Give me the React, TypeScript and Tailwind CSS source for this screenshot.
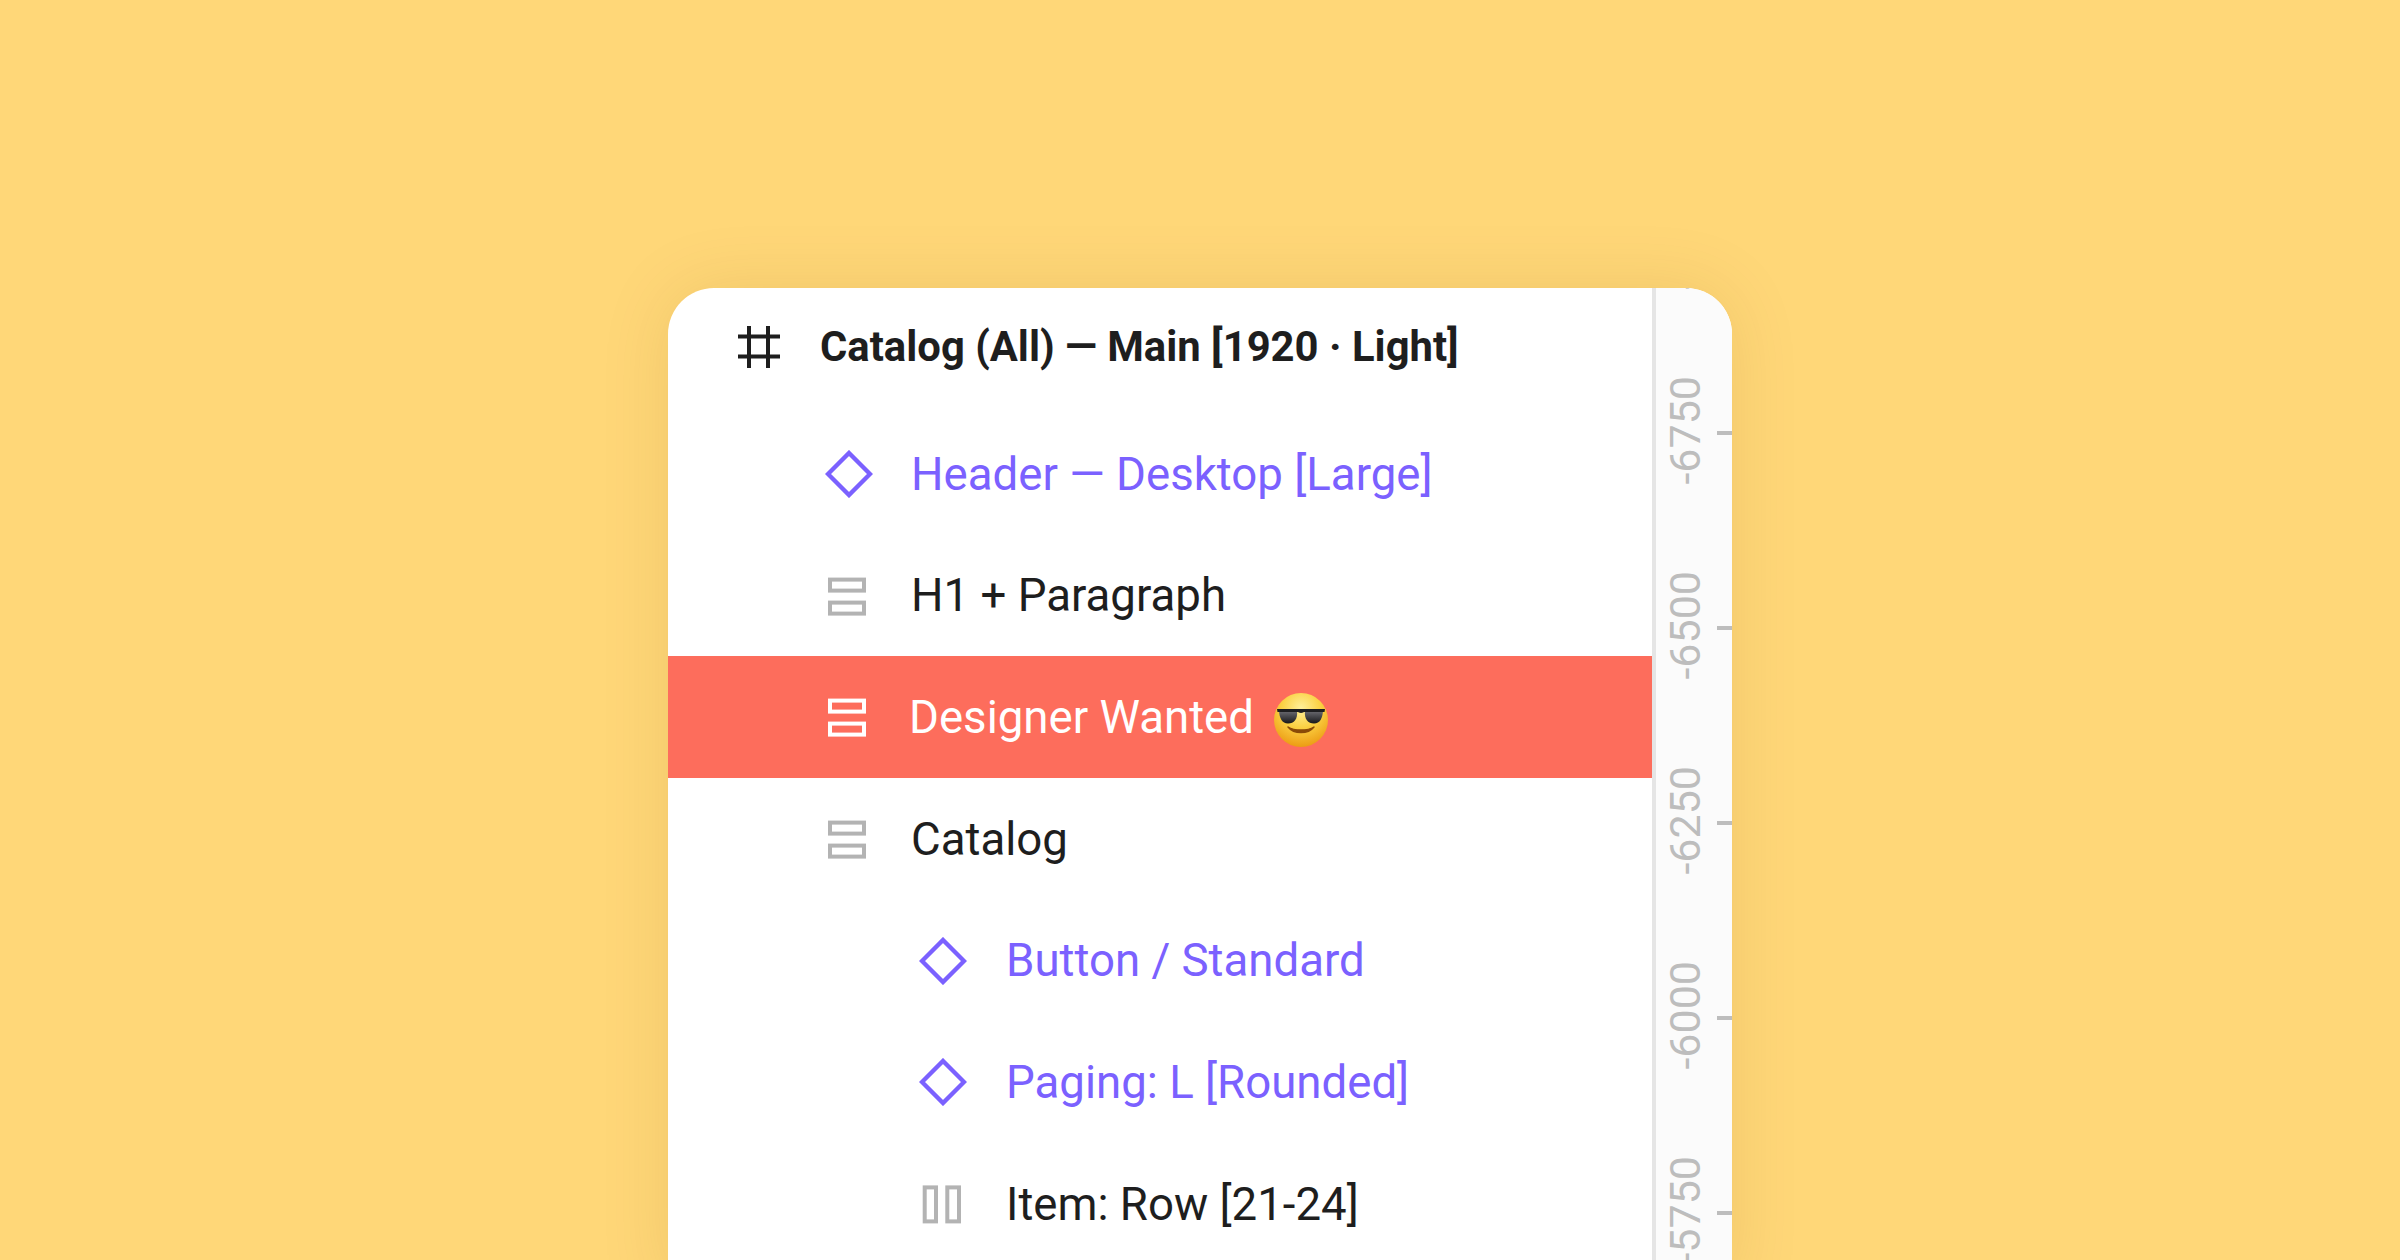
import React from 'react'

const Diamond = () => (
    <svg width="48" height="48" viewBox="0 0 48 48" fill="none" className="shrink-0">
        <path d="M24 3 L45 24 L24 45 L3 24 Z" stroke="#7B61FF" strokeWidth="4.4" />
    </svg>
)

const RowsIcon = ({ color }: { color: string }) => (
    <svg width="48" height="48" viewBox="0 0 48 48" fill="none" className="shrink-0">
        <rect x="5" y="7.6" width="34" height="11" stroke={color} strokeWidth="4" />
        <rect x="5" y="30.6" width="34" height="11" stroke={color} strokeWidth="4" />
    </svg>
)

const ColsIcon = () => (
    <svg width="48" height="48" viewBox="0 0 48 48" fill="none" className="shrink-0">
        <rect x="5.7" y="7.4" width="11.3" height="34" stroke="#B3B3B3" strokeWidth="4" />
        <rect x="28.3" y="7.4" width="11.7" height="34" stroke="#B3B3B3" strokeWidth="4" />
    </svg>
)

const HashIcon = () => (
    <svg width="42" height="42" viewBox="0 0 42 42" fill="none" className="shrink-0">
        <path d="M11 0 V42 M30 0 V42 M0 10.5 H42 M0 30.5 H42" stroke="#1E1E1E" strokeWidth="4" />
    </svg>
)

const CoolEmoji = () => (
    <svg width="56" height="56" viewBox="0 0 56 56" className="shrink-0 ml-[19px] mt-[5px]">
        <defs>
            <radialGradient id="face" cx="50%" cy="28%" r="72%">
                <stop offset="0%" stopColor="#FFF09A" />
                <stop offset="50%" stopColor="#FBD143" />
                <stop offset="100%" stopColor="#EC9C14" />
            </radialGradient>
            <linearGradient id="lens" x1="0" y1="0" x2="0" y2="1">
                <stop offset="0%" stopColor="#6A6A70" />
                <stop offset="100%" stopColor="#18181A" />
            </linearGradient>
        </defs>
        <circle cx="28" cy="28" r="27" fill="url(#face)" />
        <path d="M6 19 H24 C25 27 21 31.5 15 31.5 C9 31.5 6.5 26 6 19 Z" fill="url(#lens)" />
        <path d="M32 19 H50 C49.5 26 47 31.5 41 31.5 C35 31.5 31 27 32 19 Z" fill="url(#lens)" />
        <path d="M4 17 H52 L51.5 20 H4.5 Z" fill="#1E1E20" />
        <path d="M24 19 C26 21.5 30 21.5 32 19 Z" fill="#1E1E20" />
        <path d="M15 35 C21 42.5 35 42.5 41 35 C35 39 21 39 15 35 Z" fill="#8A4B08" stroke="#8A4B08" strokeWidth="1.4" strokeLinejoin="round" />
    </svg>
)

const rulerMarks = ['-7000', '-6750', '-6500', '-6250', '-6000', '-5750']

const App = () => {
    return (
        <div className="h-[1260px] w-full overflow-hidden bg-[#FFD778] pt-[288px] font-['Roboto',sans-serif]">
            <div className="ml-[668px] flex h-[1000px] w-[1064px] overflow-hidden rounded-t-[46px] bg-white shadow-[0_0_70px_rgba(120,80,0,0.12)]">
                <div className="w-[984px] shrink-0 text-[45.6px] text-[#1E1E1E]">
                    <div className="flex h-[125px] items-center gap-[40px] pb-[7px] pl-[70px] text-[41.8px]">
                        <HashIcon />
                        <span className="font-bold">Catalog (All) — Main [1920 · Light]</span>
                    </div>
                    <div className="flex h-[121.7px] items-center gap-[38px] pl-[157px] text-[#7B61FF]">
                        <Diamond />
                        <span className="pt-[2px]">Header — Desktop [Large]</span>
                    </div>
                    <div className="flex h-[121.7px] items-center gap-[38px] pl-[157px]">
                        <RowsIcon color="#B3B3B3" />
                        <span className="pt-[2px]">H1 + Paragraph</span>
                    </div>
                    <div className="flex h-[121.7px] items-center gap-[38px] bg-[#FD6D5C] pl-[157px] text-white">
                        <RowsIcon color="#FFFFFF" />
                        <span className="-ml-[2px] pt-[2px]">Designer Wanted</span>
                        <span className="-ml-[38px] flex"><CoolEmoji /></span>
                    </div>
                    <div className="flex h-[121.7px] items-center gap-[38px] pl-[157px]">
                        <RowsIcon color="#B3B3B3" />
                        <span className="pt-[2px]">Catalog</span>
                    </div>
                    <div className="flex h-[121.7px] items-center gap-[39px] pl-[251px] text-[#7B61FF]">
                        <Diamond />
                        <span className="pt-[2px]">Button / Standard</span>
                    </div>
                    <div className="flex h-[121.7px] items-center gap-[39px] pl-[251px] text-[#7B61FF]">
                        <Diamond />
                        <span className="pt-[2px]">Paging: L [Rounded]</span>
                    </div>
                    <div className="flex h-[121.7px] items-center gap-[39px] pl-[251px]">
                        <ColsIcon />
                        <span className="pt-[2px]">Item: Row [21-24]</span>
                    </div>
                </div>
                <div className="flex-1 border-l-4 border-[#E5E5E5] bg-[#FBFBFB]">
                    <div className="-mt-[148px]">
                        {rulerMarks.map((mark) => (
                            <div key={mark} className="flex h-[195px] items-center justify-between">
                                <span className="ml-[8px] -mt-[4px] rotate-180 text-[43px] leading-none text-[#BDBDBD] [writing-mode:vertical-rl]">{mark}</span>
                                <div className="h-[4px] w-[15px] bg-[#BDBDBD]"></div>
                            </div>
                        ))}
                    </div>
                </div>
            </div>
        </div>
    )
}

export default App
